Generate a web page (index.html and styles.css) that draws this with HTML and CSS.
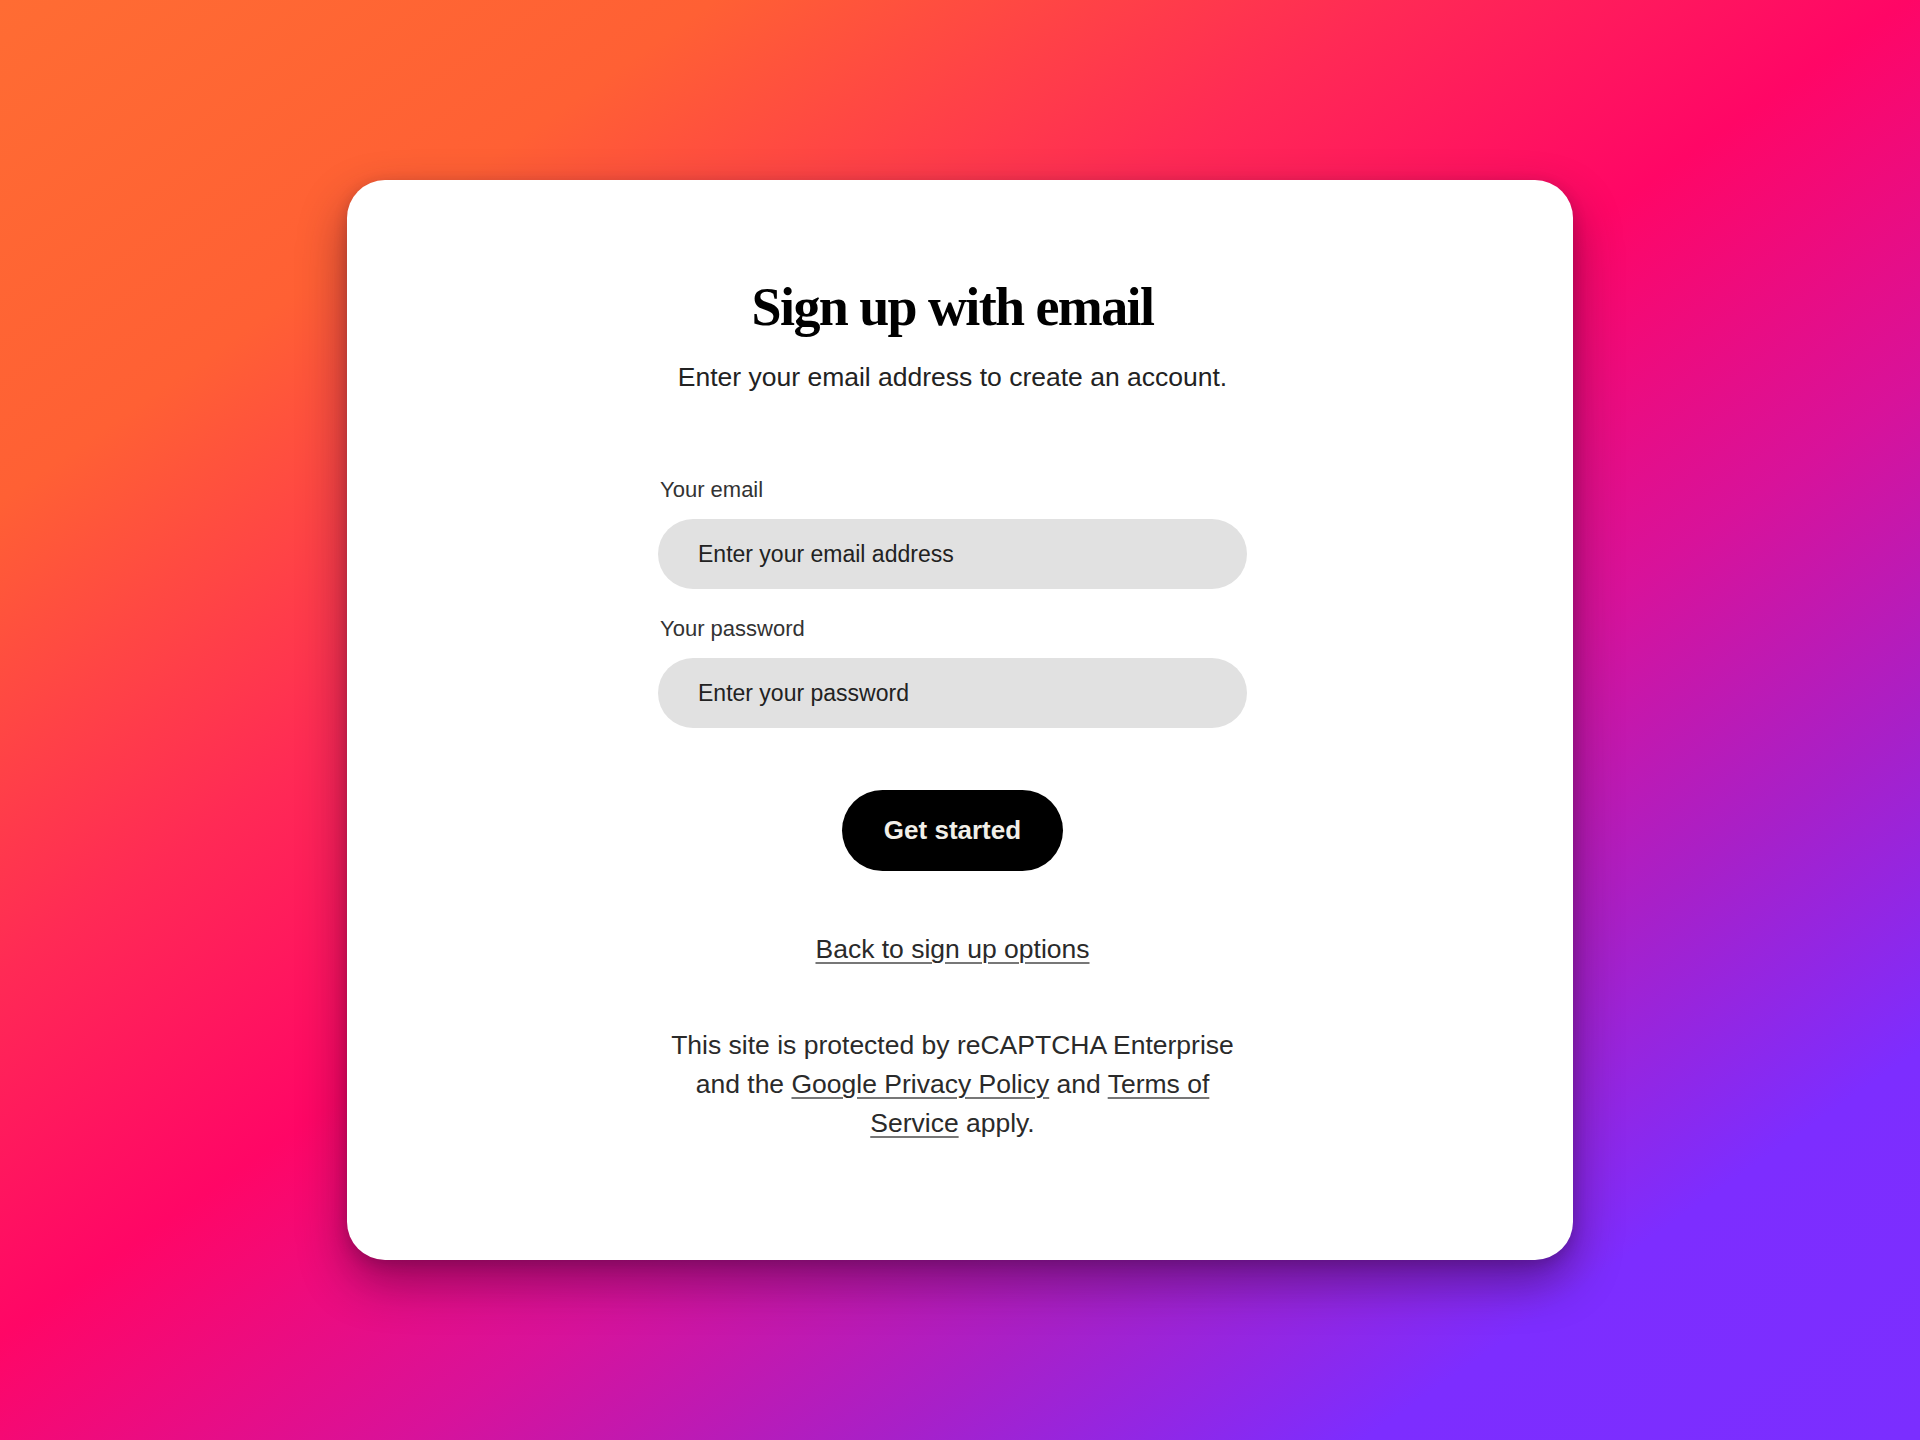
FILE: index.html
```html
<!DOCTYPE html>
<html lang="en">
<head>
<meta charset="utf-8">
<title>Sign up with email</title>
<link rel="stylesheet" href="styles.css">
</head>
<body>
<main class="stage">
  <section class="card">
    <h1 class="title">Sign up with email</h1>
    <p class="subtitle">Enter your email address to create an account.</p>
    <form class="form">
      <label class="label" for="email">Your email</label>
      <input class="field" id="email" type="email" placeholder="Enter your email address">
      <label class="label label-second" for="password">Your password</label>
      <input class="field" id="password" type="password" placeholder="Enter your password">
      <button class="btn" type="button">Get started</button>
    </form>
    <a class="back" href="#">Back to sign up options</a>
    <p class="legal">This site is protected by reCAPTCHA Enterprise and the <a href="#">Google Privacy Policy</a> and <a href="#">Terms of Service</a> apply.</p>
  </section>
</main>
</body>
</html>
```

FILE: styles.css
```css
* { box-sizing: border-box; }

html, body {
  margin: 0;
  padding: 0;
}

body {
  width: 1920px;
  height: 1440px;
  font-family: "Liberation Sans", Arial, sans-serif;
  background: linear-gradient(145deg, #ff6c33 0%, #ff6034 18%, #ff2a55 35%, #ff0666 48%, #d8129a 62%, #a820c8 74%, #7d2dff 86%, #7b2eff 100%);
  overflow: hidden;
}

.stage {
  width: 1920px;
  height: 1440px;
  display: flex;
  align-items: center;
  justify-content: center;
}

.card {
  width: 1226px;
  height: 1080px;
  background: #ffffff;
  border-radius: 38px;
  box-shadow: 0 22px 48px rgba(40, 0, 40, 0.45), 0 4px 14px rgba(40, 0, 40, 0.18);
  display: flex;
  flex-direction: column;
  align-items: center;
  padding-top: 100px;
  padding-right: 15px;
}

.title {
  margin: 0;
  font-family: "Liberation Serif", "Times New Roman", serif;
  font-weight: 700;
  font-size: 54px;
  line-height: 54px;
  letter-spacing: -1.6px;
  color: #000;
}

.subtitle {
  margin: 27px 0 0;
  font-size: 26.5px;
  line-height: 32px;
  color: #222;
}

.form {
  width: 589px;
  margin-top: 84px;
  display: flex;
  flex-direction: column;
  align-items: stretch;
}

.label {
  font-size: 22px;
  line-height: 26px;
  color: #333;
  margin-left: 2px;
}

.label-second {
  margin-top: 27px;
}

.field {
  margin-top: 16px;
  height: 70px;
  border: 0;
  border-radius: 35px;
  background: #e1e1e1;
  padding: 0 40px;
  font-family: "Liberation Sans", Arial, sans-serif;
  font-size: 23px;
  color: #222;
  outline: none;
}

.field::placeholder {
  color: #222;
  opacity: 1;
}

.btn {
  align-self: center;
  margin-top: 62px;
  width: 221px;
  height: 81px;
  border: 0;
  border-radius: 41px;
  background: #000;
  color: #f2efe8;
  font-family: "Liberation Sans", Arial, sans-serif;
  font-weight: 700;
  font-size: 26px;
  cursor: pointer;
}

.back {
  margin-top: 62px;
  font-size: 26.5px;
  line-height: 32px;
  color: #2a2a2a;
  text-decoration: underline;
  text-decoration-color: #777;
  text-decoration-thickness: 1.5px;
  text-underline-offset: 4px;
}

.legal {
  margin: 61px 0 0;
  width: 580px;
  text-align: center;
  font-size: 26.5px;
  line-height: 39px;
  color: #2a2a2a;
}

.legal a {
  color: #2a2a2a;
  text-decoration: underline;
  text-decoration-color: #777;
  text-decoration-thickness: 1.5px;
  text-underline-offset: 4px;
}
```
